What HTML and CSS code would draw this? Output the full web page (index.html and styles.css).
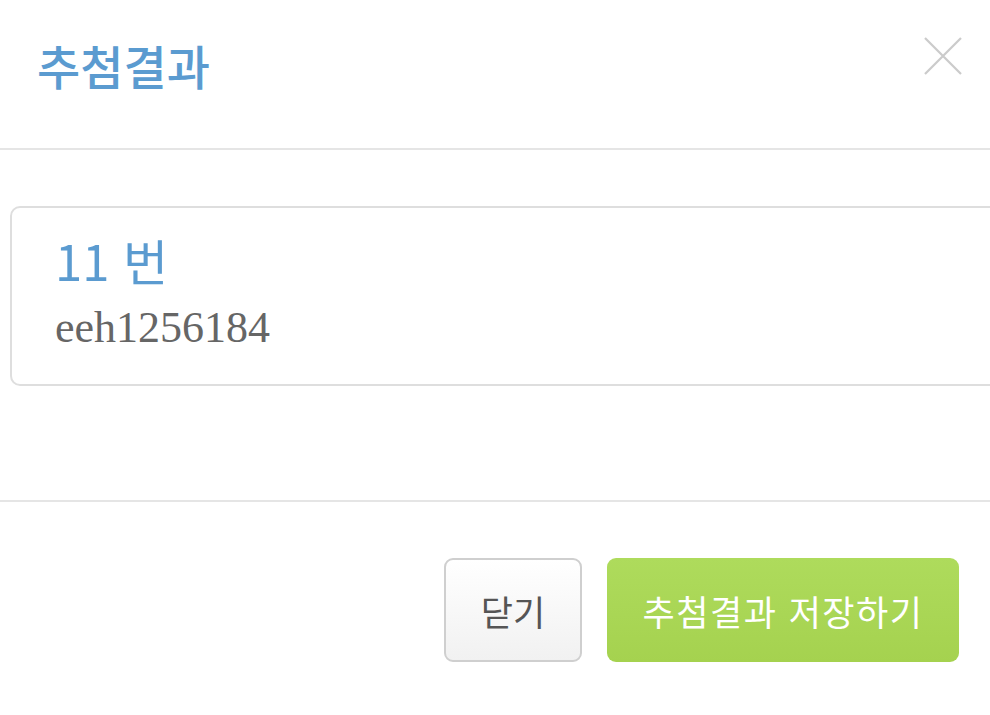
FILE: index.html
```html
<!DOCTYPE html>
<html lang="ko">
<head>
<meta charset="utf-8">
<link rel="stylesheet" href="styles.css">
</head>
<body>
<div class="modal">
  <div class="modal-header">
    <h4 class="modal-title">추첨결과</h4>
    <button class="close" aria-label="닫기">
      <svg width="40" height="40" viewBox="0 0 40 40"><path d="M2 2 L38 38 M38 2 L2 38" stroke="#cbcbcb" stroke-width="2.2" fill="none"/></svg>
    </button>
  </div>
  <div class="modal-body">
    <div class="result-card">
      <div class="result-num">11 번</div>
      <div class="result-id">eeh1256184</div>
    </div>
  </div>
  <div class="modal-footer">
    <button class="btn btn-default">닫기</button>
    <button class="btn btn-success">추첨결과 저장하기</button>
  </div>
</div>
</body>
</html>
```

FILE: styles.css
```css
html, body {
  margin: 0;
  padding: 0;
  background: #fff;
  overflow: hidden;
}
.modal {
  width: 990px;
  height: 715px;
  font-family: "Noto Sans CJK KR", "Noto Sans", sans-serif;
  overflow: hidden;
}
.modal-header {
  display: flex;
  align-items: center;
  justify-content: space-between;
  height: 150px;
  box-sizing: border-box;
  padding: 0 27px 10px 37px;
  border-bottom: 2px solid #e5e5e5;
}
.modal-title {
  margin: 0;
  font-size: 47px;
  font-weight: 500;
  color: #5b9bd0;
  line-height: 1;
  padding-bottom: 10px;
}
.close {
  border: 0;
  background: none;
  padding: 0;
  margin-bottom: 26px;
  width: 40px;
  height: 40px;
  display: flex;
}
.modal-body {
  padding: 56px 0 114px 10px;
}
.result-card {
  width: 1000px;
  height: 180px;
  box-sizing: border-box;
  border: 2px solid #dedede;
  border-radius: 10px;
  padding: 22px 0 0 43px;
}
.result-num {
  font-size: 49px;
  color: #5b9bd0;
  line-height: 60px;
}
.result-id {
  font-family: "Liberation Serif", serif;
  font-size: 44px;
  color: #666;
  line-height: 60px;
  margin-top: 8px;
}
.modal-footer {
  border-top: 2px solid #e5e5e5;
  display: flex;
  justify-content: flex-end;
  gap: 25px;
  padding: 56px 31px 0 0;
}
.btn {
  height: 104px;
  border-radius: 9px;
  font-family: "Noto Sans CJK KR", "Noto Sans", sans-serif;
  font-size: 35px;
  line-height: 1;
  box-sizing: border-box;
}
.btn-default {
  width: 138px;
  border: 2px solid #cfcfcf;
  background: linear-gradient(#ffffff, #f1f1f1);
  color: #555;
}
.btn-success {
  width: 352px;
  border: 0;
  letter-spacing: 1.5px;
  background: linear-gradient(#aedb5c, #a5d24f);
  color: #fff;
}
```
